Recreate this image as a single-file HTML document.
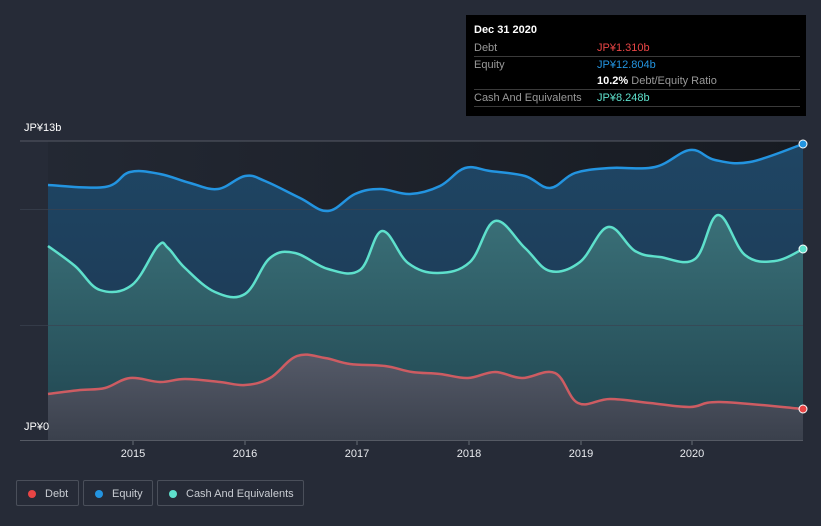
<!DOCTYPE html>
<html><head><meta charset="utf-8"><style>
body{margin:0;width:821px;height:526px;background:#262b37;font-family:"Liberation Sans",sans-serif;overflow:hidden;position:relative}
.t{position:absolute;color:#fff;font-size:11px}
.tip{position:absolute;left:466px;top:15px;width:340px;height:101px;background:#000;font-size:11px}
.row{position:absolute;left:8px;width:326px;border-bottom:1px solid #3a3a3a;height:16px;line-height:16px}
.row span{position:absolute;left:123px}
.lg{position:absolute;top:480px;height:26px;border:1px solid #4a4f5a;border-radius:2px;color:#c8ccd2;font-size:11px;line-height:26px;box-sizing:border-box}
.lg i{position:absolute;left:11px;top:9px;width:8px;height:8px;border-radius:50%}
</style></head><body>
<svg width="821" height="526" style="position:absolute;left:0;top:0">
<defs>
<linearGradient id="bg" x1="0" x2="1"><stop offset="0" stop-color="#232833"/><stop offset="1" stop-color="#171b22"/></linearGradient>
<linearGradient id="eq" x1="0" y1="0" x2="0" y2="1"><stop offset="0" stop-color="#1f4664"/><stop offset="1" stop-color="#1c3550"/></linearGradient>
<linearGradient id="ca" x1="0" y1="0" x2="0" y2="1"><stop offset="0" stop-color="#3a7078"/><stop offset="1" stop-color="#20444f"/></linearGradient>
<linearGradient id="de" x1="0" y1="0" x2="0" y2="1"><stop offset="0" stop-color="#555a68"/><stop offset="1" stop-color="#3a404c"/></linearGradient>
</defs>
<rect x="48" y="141" width="755" height="299" fill="url(#bg)"/>
<path id="fe" fill="url(#eq)"/>
<path id="fc" fill="url(#ca)"/>
<path id="fd" fill="url(#de)"/>
<line x1="20" y1="141" x2="803" y2="141" stroke="#555a64"/>
<line x1="20" y1="209.5" x2="803" y2="209.5" stroke="#3a4350" stroke-opacity=".7"/>
<line x1="20" y1="325.5" x2="803" y2="325.5" stroke="#3a4350" stroke-opacity=".7"/>
<line x1="20" y1="440.5" x2="803" y2="440.5" stroke="#555a64"/>
<g fill="none" stroke-width="2.5" stroke-linejoin="round">
<path id="le" stroke="#2394e0"/>
<path id="lc" stroke="#5ee0cc"/>
<path id="ld" stroke="#cd5c62"/>
</g>
<circle cx="803" cy="144" r="4" fill="#2394e0" stroke="#fff"/>
<circle cx="803" cy="249" r="4" fill="#5ee0cc" stroke="#fff"/>
<circle cx="803" cy="409" r="4" fill="#e84545" stroke="#fff"/>
<g stroke="#666c76"><line x1="133" y1="441" x2="133" y2="445"/><line x1="245" y1="441" x2="245" y2="445"/><line x1="357" y1="441" x2="357" y2="445"/><line x1="469" y1="441" x2="469" y2="445"/><line x1="581" y1="441" x2="581" y2="445"/><line x1="692" y1="441" x2="692" y2="445"/></g>
<g fill="#e8eaee" font-size="11" text-anchor="middle" font-family="Liberation Sans"><text x="133" y="457">2015</text><text x="245" y="457">2016</text><text x="357" y="457">2017</text><text x="469" y="457">2018</text><text x="581" y="457">2019</text><text x="692" y="457">2020</text></g>
</svg>
<div class="t" style="left:24px;top:122px">JP¥13b</div>
<div class="t" style="left:24px;top:421px">JP¥0</div>
<div class="tip">
<div style="position:absolute;left:8px;top:9px;color:#fff;font-weight:bold">Dec 31 2020</div>
<div class="row" style="top:25px;color:#999">Debt<span style="color:#e84545">JP¥1.310b</span></div>
<div class="row" style="top:42px;color:#999;border:none">Equity<span style="color:#2394e0">JP¥12.804b</span></div>
<div class="row" style="top:58px;color:#999"><span><b style="color:#fff">10.2%</b> Debt/Equity Ratio</span></div>
<div class="row" style="top:75px;color:#999">Cash And Equivalents<span style="color:#5ee0cc">JP¥8.248b</span></div>
</div>
<div class="lg" style="left:16px;width:63px"><i style="background:#e84545"></i><span style="position:absolute;left:28px">Debt</span></div>
<div class="lg" style="left:83px;width:70px"><i style="background:#2394e0"></i><span style="position:absolute;left:28px">Equity</span></div>
<div class="lg" style="left:157px;width:147px"><i style="background:#5ee0cc"></i><span style="position:absolute;left:28px">Cash And Equivalents</span></div>
<script>
function sm(p){var d="M"+p[0][0]+","+p[0][1];for(var i=0;i<p.length-1;i++){var a=p[i-1]||p[i],b=p[i],c=p[i+1],e=p[i+2]||c,t=0.18;
d+=" C"+(b[0]+(c[0]-a[0])*t).toFixed(1)+","+(b[1]+(c[1]-a[1])*t).toFixed(1)+" "+(c[0]-(e[0]-b[0])*t).toFixed(1)+","+(c[1]-(e[1]-b[1])*t).toFixed(1)+" "+c[0]+","+c[1];}return d;}
function P(s){return s.trim().split(/\s+/).map(function(q){return q.split(",").map(Number)});}
var E=P("48,185 105,187 130,172 160,174 190,183 218,189 245,176 265,181 300,198 328,211 355,194 380,189 410,194 440,186 465,168 490,171 525,176 550,188 575,173 610,168 655,167 690,150 715,160 750,162 803,144");
var C=P("48,246 75,266 100,290 132,285 158,246 168,248 185,268 215,292 245,294 270,258 295,253 328,269 360,270 382,231 408,263 438,273 470,262 495,221 525,248 550,271 580,262 608,227 635,251 660,257 695,259 718,215 745,255 775,261 803,249");
var D=P("48,394 80,390 105,388 130,378 160,382 185,379 220,382 245,385 270,378 297,356 325,358 350,364 385,366 412,372 440,374 468,378 495,372 522,378 555,373 578,403 610,399 650,403 690,407 720,402 803,409");
[[E,"e"],[C,"c"],[D,"d"]].forEach(function(x){var s=sm(x[0]);document.getElementById("l"+x[1]).setAttribute("d",s);document.getElementById("f"+x[1]).setAttribute("d",s+" L803,440 L48,440Z");});
</script>
</body></html>
